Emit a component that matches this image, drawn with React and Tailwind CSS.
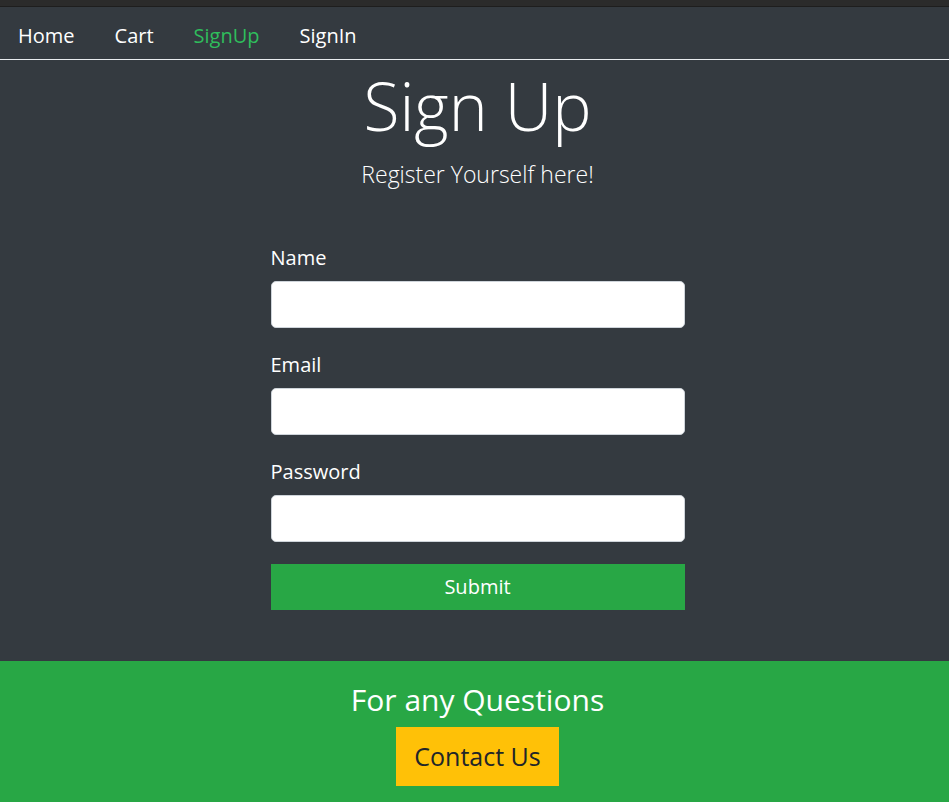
export default function App() {
  const fields = ['Name', 'Email', 'Password'];

  return (
    <div className="min-h-[802px] bg-[#343a40] flex flex-col" style={{ fontFamily: '"Open Sans", "Noto Sans", sans-serif' }}>
      {/* top strip */}
      <div className="h-[7px] bg-[#2b2b2b] border-b border-[#1e1e1e]" />

      {/* nav */}
      <nav className="h-[53px] pt-[6px] flex items-center gap-[40px] pl-[18px] border-b border-[#e9ecef] text-[20px] text-white">
        <a href="#">Home</a>
        <a href="#">Cart</a>
        <a href="#" className="text-[#2fbd5c]">SignUp</a>
        <a href="#">SignIn</a>
      </nav>

      <div className="pl-[6px] flex flex-col">
        {/* heading */}
        <div className="flex flex-col items-center text-white">
          <h1 className="text-[66px] font-light leading-[84px] mt-[3px]">Sign Up</h1>
          <p className="text-[23px] font-light leading-[34px] mt-[10px]">Register Yourself here!</p>
        </div>

        {/* form */}
        <form className="w-[414px] mx-auto mt-[52px] flex flex-col">
          {fields.map((f) => (
            <div key={f} className="flex flex-col mb-[22px]">
              <label className="text-[20px] leading-[30px] text-white mb-[8px]">{f}</label>
              <input
                type={f === 'Password' ? 'password' : 'text'}
                className="h-[47px] bg-white border border-[#ced4da] rounded-[5px] outline-none px-3"
              />
            </div>
          ))}
          <button type="button" className="h-[46px] bg-[#28a745] text-white text-[20px]">
            Submit
          </button>
        </form>
      </div>

      <div className="h-[51px]" />

      {/* footer */}
      <footer className="flex-1 bg-[#28a745] flex flex-col items-center pl-[6px] pt-[21px] pb-[20px]">
        <h4 className="text-[30px] leading-[36px] text-white">For any Questions</h4>
        <button type="button" className="mt-[9px] bg-[#ffc107] text-[#212529] text-[25px] leading-[37px] px-[18px] py-[11px]">
          Contact Us
        </button>
      </footer>
    </div>
  );
}
